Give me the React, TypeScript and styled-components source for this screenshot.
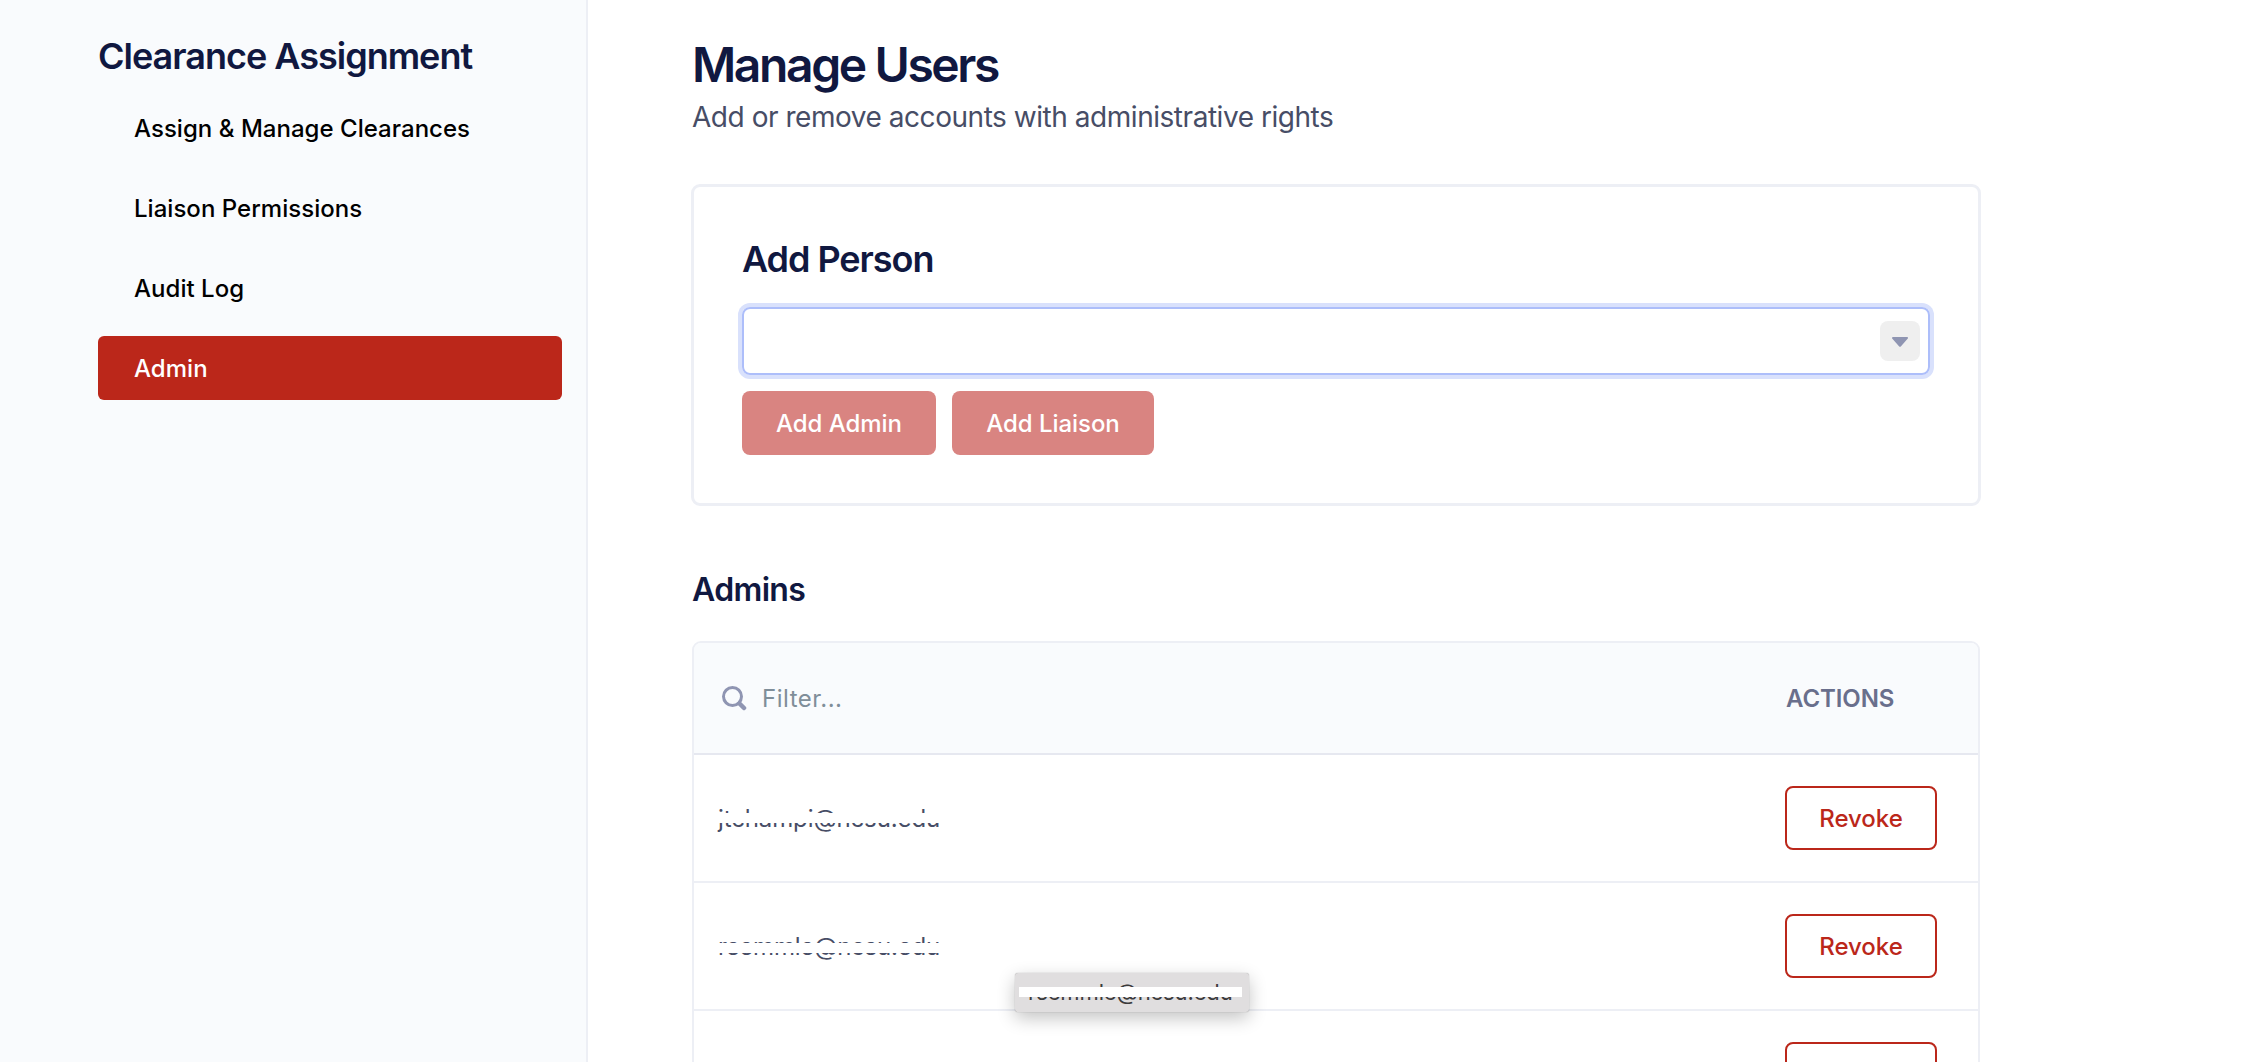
import React from 'react';
import styled, { createGlobalStyle } from 'styled-components';

const GlobalStyle = createGlobalStyle`
  *, *::before, *::after { box-sizing: border-box; }
  html, body { margin: 0; padding: 0; background: #fff; overflow: hidden; }
  body, button, input {
    font-family: Inter, Roboto, "Liberation Sans", sans-serif;
    -webkit-font-smoothing: antialiased;
  }
  h1, h2, h3, p { margin: 0; }
`;

const Layout = styled.div`
  display: flex;
  height: 1062px;
  overflow: hidden;
`;

const Sidebar = styled.aside`
  width: 588px;
  flex: none;
  padding: 34px 24px 0 98px;
  background: #f9fbfd;
  border-right: 2px solid #edeff5;
`;

const SidebarTitle = styled.h2`
  font-size: 36px;
  line-height: 44px;
  font-weight: 600;
  letter-spacing: -1px;
  color: #101840;
  white-space: nowrap;
`;

const Nav = styled.nav`
  display: flex;
  flex-direction: column;
  gap: 16px;
  margin-top: 18px;
`;

const NavItem = styled.a<{ $active?: boolean }>`
  display: flex;
  align-items: center;
  height: 64px;
  padding-left: 36px;
  border-radius: 6px;
  font-size: 24px;
  font-weight: 500;
  letter-spacing: 0.03px;
  white-space: nowrap;
  color: ${(p) => (p.$active ? '#fff' : '#000')};
  background: ${(p) => (p.$active ? '#bb271a' : 'transparent')};
`;

const Main = styled.main`
  width: 1394px;
  flex: none;
  padding: 37px 1px 0 103px;
`;

const PageTitle = styled.h1`
  padding-left: 1px;
  font-size: 48px;
  line-height: 56px;
  font-weight: 600;
  letter-spacing: -2.4px;
  color: #101840;
`;

const PageSubtitle = styled.p`
  padding-left: 1px;
  margin-top: 6px;
  font-size: 28px;
  line-height: 36px;
  letter-spacing: -0.46px;
  color: #474d66;
`;

const Card = styled.section`
  height: 322px;
  margin-top: 49px;
  padding: 48px;
  border: 3px solid #edeff5;
  border-radius: 9px;
`;

const CardTitle = styled.h2`
  font-size: 36px;
  line-height: 48px;
  font-weight: 600;
  letter-spacing: -1.05px;
  color: #101840;
`;

const Combobox = styled.div`
  display: flex;
  align-items: center;
  height: 68px;
  margin-top: 24px;
  padding-right: 8px;
  border: 2px solid #adbefa;
  border-radius: 8px;
  box-shadow: 0 0 0 4px #d9e1fc;
`;

const ComboInput = styled.input`
  flex: 1;
  height: 100%;
  padding: 0 24px;
  border: 0;
  outline: 0;
  background: transparent;
  font-size: 24px;
`;

const CaretButton = styled.button`
  display: flex;
  align-items: center;
  justify-content: center;
  width: 40px;
  height: 40px;
  padding: 2px 0 0;
  border: 0;
  border-radius: 8px;
  background: #efefef;
`;

const ButtonRow = styled.div`
  display: flex;
  gap: 16px;
  margin-top: 16px;
`;

const PrimaryButton = styled.button<{ $width: number }>`
  width: ${(p) => p.$width}px;
  height: 64px;
  padding: 0;
  border: 0;
  border-radius: 8px;
  background: #d98481;
  color: #fff;
  font-size: 24px;
  font-weight: 500;
  letter-spacing: -0.05px;
`;

const SectionTitle = styled.h3`
  margin-top: 64px;
  padding-left: 1px;
  font-size: 32px;
  line-height: 40px;
  font-weight: 600;
  letter-spacing: -0.65px;
  color: #101840;
`;

const Table = styled.section`
  margin: 31px 0 0 1px;
  height: 520px;
  border: 2px solid #edeff5;
  border-radius: 9px;
  overflow: hidden;
  width: 1288px;
`;

const HeaderRow = styled.div`
  display: flex;
  align-items: center;
  height: 112px;
  padding: 0 41px 0 27px;
  border-bottom: 2px solid #e6e8f0;
  background: #f9fbfd;
`;

const FilterText = styled.span`
  flex: 1;
  margin-left: 15px;
  font-size: 24px;
  letter-spacing: 0.5px;
  color: #7f8e99;
`;

const ActionsLabel = styled.span`
  width: 152px;
  padding-left: 1px;
  font-size: 24px;
  font-weight: 600;
  letter-spacing: -0.1px;
  color: #696f8c;
`;

const Row = styled.div`
  display: flex;
  align-items: center;
  justify-content: space-between;
  height: 128px;
  padding: 0 41px 0 24px;
  border-bottom: 2px solid #edeff5;
`;

const Email = styled.span<{ $tracking: number }>`
  position: relative;
  margin-top: 2px;
  font-size: 24px;
  line-height: 32px;
  letter-spacing: ${(p) => p.$tracking}px;
  color: #474d66;
  white-space: nowrap;
`;

const Redaction = styled.span<{ $top: number; $inset?: number }>`
  position: absolute;
  top: ${(p) => p.$top}px;
  left: ${(p) => p.$inset ?? -4}px;
  right: ${(p) => (p.$inset ?? -7) + 3}px;
  height: 10px;
  background: #fff;
`;

const RevokeButton = styled.button`
  width: 152px;
  height: 64px;
  padding: 0;
  border: 2px solid #bb271a;
  border-radius: 8px;
  background: #fff;
  color: #bb271a;
  font-size: 24px;
  font-weight: 500;
  letter-spacing: -0.05px;
`;

const Tooltip = styled.div`
  position: absolute;
  left: 1015px;
  top: 973px;
  width: 234px;
  height: 39px;
  padding-left: 13px;
  border-radius: 3px;
  background: #e0dedf;
  box-shadow: 0 0 1px rgba(0, 0, 0, 0.4), 0 6px 18px rgba(0, 0, 0, 0.24);
  font-size: 22px;
  line-height: 38px;
  letter-spacing: -0.12px;
  color: #3c3b3c;
  white-space: nowrap;
`;

const navItems = ['Assign & Manage Clearances', 'Liaison Permissions', 'Audit Log', 'Admin'];

const admins = [
  { email: 'jtchampi@ncsu.edu', tracking: -0.12, strip: 10 },
  { email: 'rsemmle@ncsu.edu', tracking: -0.2, strip: 12 },
  { email: '', tracking: 0, strip: 12 },
];

export default function App() {
  return (
    <>
      <GlobalStyle />
      <Layout>
        <Sidebar>
          <SidebarTitle>Clearance Assignment</SidebarTitle>
          <Nav>
            {navItems.map((item) => (
              <NavItem key={item} $active={item === 'Admin'}>{item}</NavItem>
            ))}
          </Nav>
        </Sidebar>
        <Main>
          <PageTitle>Manage Users</PageTitle>
          <PageSubtitle>Add or remove accounts with administrative rights</PageSubtitle>
          <Card>
            <CardTitle>Add Person</CardTitle>
            <Combobox>
              <ComboInput />
              <CaretButton>
                <svg width="16" height="10" viewBox="0 0 16 10">
                  <path d="M1 0h14c1 0 1.3 1.1.6 1.8L8.8 9.4c-.5.6-1.1.6-1.6 0L.4 1.8C-.3 1.1 0 0 1 0z" fill="#8f95b2" />
                </svg>
              </CaretButton>
            </Combobox>
            <ButtonRow>
              <PrimaryButton $width={194}>Add Admin</PrimaryButton>
              <PrimaryButton $width={202}>Add Liaison</PrimaryButton>
            </ButtonRow>
          </Card>
          <SectionTitle>Admins</SectionTitle>
          <Table>
            <HeaderRow>
              <svg width="26" height="26" viewBox="0 0 26 26" fill="none" stroke="#8f95b2">
                <circle cx="11.5" cy="11.5" r="9" strokeWidth="3" />
                <path d="M18.5 18.5l4.5 4.5" strokeWidth="4.5" strokeLinecap="round" />
              </svg>
              <FilterText>Filter...</FilterText>
              <ActionsLabel>ACTIONS</ActionsLabel>
            </HeaderRow>
            {admins.map(({ email, tracking, strip }, i) => (
              <Row key={i}>
                <Email $tracking={tracking}>
                  {email}
                  {email && <Redaction $top={strip} />}
                </Email>
                {i < 2 ? <RevokeButton>Revoke</RevokeButton> : <RevokeButton aria-label="Revoke" />}
              </Row>
            ))}
          </Table>
        </Main>
      </Layout>
      <Tooltip>
        rsemmle@ncsu.edu
        <Redaction $top={14} $inset={4} />
      </Tooltip>
    </>
  );
}
